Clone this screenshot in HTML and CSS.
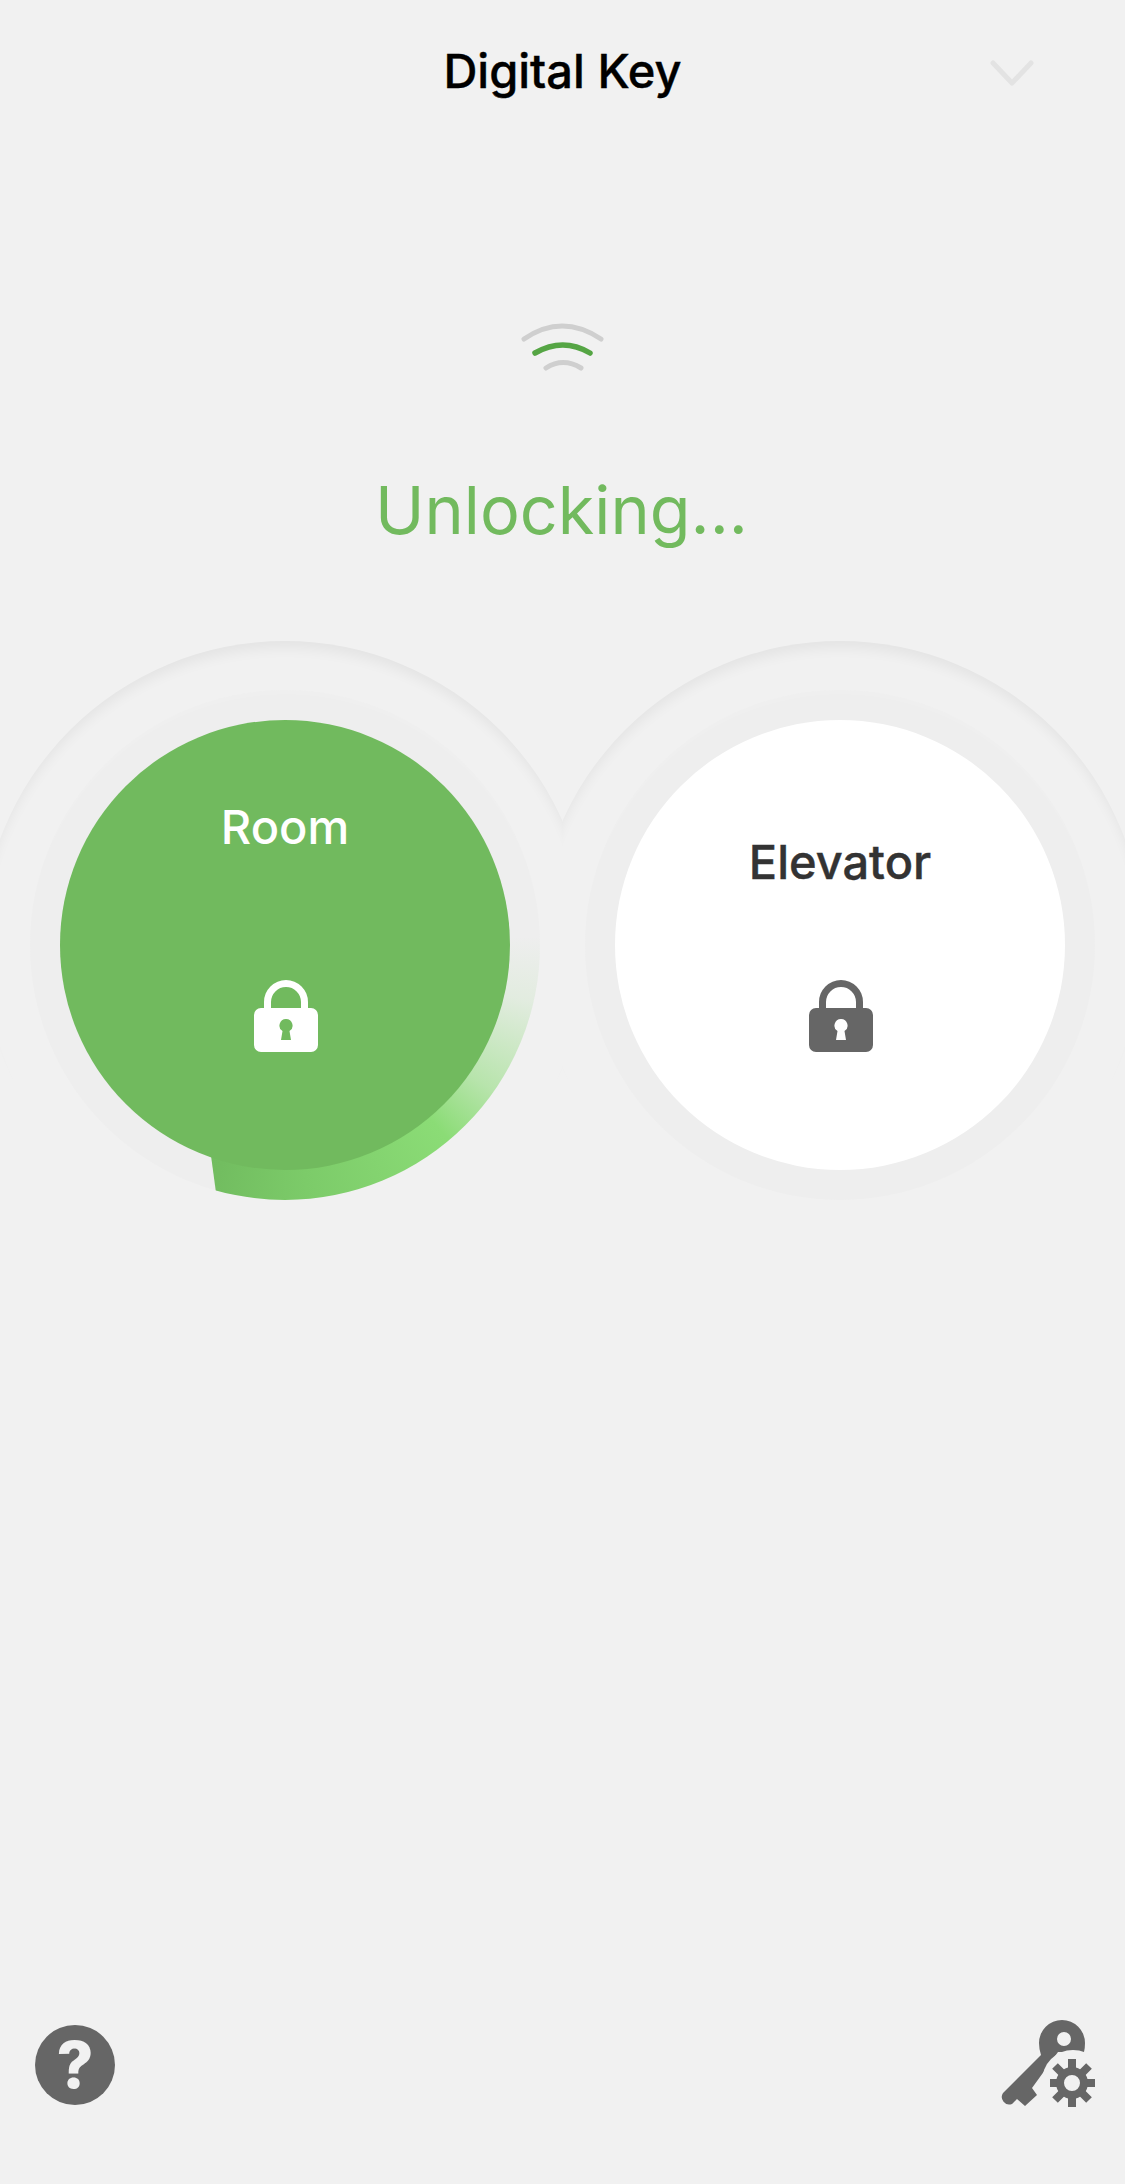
FILE: index.html
```html
<!DOCTYPE html>
<html lang="en">
<head>
<meta charset="utf-8">
<title>Digital Key</title>
<link rel="stylesheet" href="styles.css">
</head>
<body>
<main class="screen">
  <header class="topbar">
    <span></span>
    <h1 class="title">Digital Key</h1>
    <svg class="chevron" width="44" height="26" viewBox="0 0 44 26"><path d="M3 3 22 23 41 3" fill="none" stroke="#e3e3e3" stroke-width="5" stroke-linecap="round" stroke-linejoin="round"/></svg>
  </header>

  <svg class="signal" width="84" height="52" viewBox="0 0 84 52" fill="none" stroke-linecap="round">
    <path d="M3 19Q41-7 80 19" stroke="#cfcfcf" stroke-width="5"/>
    <path d="M14 33Q42 17 69 33" stroke="#55a544" stroke-width="5.500"/>
    <path d="M25 48Q42 37 60 48" stroke="#cfcfcf" stroke-width="5"/>
  </svg>

  <p class="status">Unlocking...</p>

  <section class="dials">
    <div class="dial-col dial-col-left">
      <div class="ring ring-progress">
        <div class="face face-active">
          <span class="label label-raised">Room</span>
          <svg class="lock" width="64" height="72" viewBox="0 0 64 72"><path class="lock-shape" fill-rule="evenodd" d="M10 28V22a22 22 0 0 1 44 0v6h-7V22a15 15 0 0 0-30 0v6zM7 28H57a7 7 0 0 1 7 7V65a7 7 0 0 1-7 7H7a7 7 0 0 1-7-7V35a7 7 0 0 1 7-7zM32 39a6.500 6.500 0 0 0-3.500 12L27 60H37L35.500 51A6.500 6.500 0 0 0 32 39z"/></svg>
        </div>
      </div>
    </div>
    <div class="dial-col dial-col-right">
      <div class="ring">
        <div class="face">
          <span class="label label-lowered">Elevator</span>
          <svg class="lock" width="64" height="72" viewBox="0 0 64 72"><path class="lock-shape" fill-rule="evenodd" d="M10 28V22a22 22 0 0 1 44 0v6h-7V22a15 15 0 0 0-30 0v6zM7 28H57a7 7 0 0 1 7 7V65a7 7 0 0 1-7 7H7a7 7 0 0 1-7-7V35a7 7 0 0 1 7-7zM32 39a6.500 6.500 0 0 0-3.500 12L27 60H37L35.500 51A6.500 6.500 0 0 0 32 39z"/></svg>
        </div>
      </div>
    </div>
  </section>

  <footer class="footer">
    <div class="help">?</div>
    <svg class="key-settings" width="130" height="130" viewBox="0 0 130 130">
      <path fill="#666" fill-rule="evenodd" d="M82 20a23 23 0 0 1 23 23q0 5-1 9H78L52 88l5 7-12 11-8-7-5 5a7.500 7.500 0 0 1-9-11L61 55q-2-6-2-12a23 23 0 0 1 23-23zM84 32a7 7 0 1 0 0 14 7 7 0 0 0 0-14z"/>
      <circle cx="93" cy="81" r="31" fill="#f1f1f1"/>
      <g stroke="#666" stroke-width="8">
        <path d="M92 59V107M70 83H115M75 66 109 100M109 66 75 100"/>
      </g>
      <circle cx="92" cy="83" r="12" fill="#f1f1f1" stroke="#666" stroke-width="8"/>
    </svg>
  </footer>
</main>
</body>
</html>
```

FILE: styles.css
```css
* { box-sizing: border-box; }

html, body {
  margin: 0;
  background: #f1f1f1;
}

.screen {
  width: 1125px;
  height: 2184px;
  display: flex;
  flex-direction: column;
  overflow: hidden;
  font-family: Inter, "Noto Sans", "Liberation Sans", sans-serif;
  background: #f1f1f1;
}

.topbar {
  height: 142px;
  display: grid;
  grid-template-columns: 1fr auto 1fr;
  align-items: center;
}

.title {
  margin: 0;
  font-size: 47px;
  font-weight: 500;
  line-height: 60px;
  color: #000;
  -webkit-text-stroke: 0.4px #000;
}

.chevron {
  justify-self: end;
  margin-right: 91px;
  margin-top: 4px;
}

.signal {
  display: block;
  margin: 178px 0 0 521px;
}

.status {
  margin: 98px 0 0;
  padding-right: 2px;
  height: 80px;
  line-height: 80px;
  text-align: center;
  font-size: 66.500px;
  font-weight: 400;
  color: #72ba5e;
}

.dials {
  margin-top: 70px;
  display: flex;
}

.dial-col {
  flex: 1 1 0;
  height: 640px;
  padding-top: 70px;
  display: flex;
  overflow: hidden;
  isolation: isolate;
}

.dial-col-left {
  justify-content: flex-end;
  padding-right: 22.5px;
}

.dial-col-right {
  justify-content: flex-start;
  padding-left: 22.5px;
}

.ring {
  position: relative;
  width: 510px;
  height: 510px;
  padding: 30px;
  border-radius: 50%;
  background: #eeeeee;
  box-shadow: inset 0 6px 8px -2px rgba(255, 255, 255, 0.12);
}

.ring::before {
  content: "";
  position: absolute;
  inset: -49px;
  z-index: -1;
  border-radius: 50%;
  box-shadow: inset 0 11px 13px -4px rgba(0, 0, 0, 0.055);
}

.ring-progress::after {
  content: "";
  position: absolute;
  inset: 0;
  border-radius: 50%;
  background: conic-gradient(
    rgba(139, 220, 118, 0) 0deg,
    rgba(139, 220, 118, 0) 88deg,
    rgba(139, 220, 118, 0.12) 103deg,
    rgba(139, 220, 118, 0.55) 125deg,
    #8bdc76 140deg,
    #7ccb69 175deg,
    #72bd60 196deg,
    #70bb5e 210deg,
    rgba(139, 220, 118, 0) 210.300deg
  );
  clip-path: polygon(145px 200px, 510px 200px, 510px 510px, 187px 510px);
}

.face {
  position: relative;
  z-index: 1;
  width: 450px;
  height: 450px;
  border-radius: 50%;
  background: #fff;
  display: flex;
  flex-direction: column;
  align-items: center;
}

.face-active {
  background: #71ba5e;
}

.label {
  height: 60px;
  line-height: 60px;
  font-size: 47px;
  font-weight: 500;
  color: #333;
  -webkit-text-stroke: 0.4px #333;
}

.face-active .label {
  color: #fff;
  -webkit-text-stroke: 0;
}

.label-raised {
  margin-top: 77px;
  margin-bottom: 123px;
}

.label-lowered {
  margin-top: 112px;
  margin-bottom: 88px;
}

.lock {
  margin-left: 2px;
}

.lock-shape {
  fill: #666;
}

.face-active .lock-shape {
  fill: #fff;
}

.footer {
  margin-top: auto;
  padding: 0 15px 54px 35px;
  display: flex;
  justify-content: space-between;
  align-items: center;
}

.help {
  width: 80px;
  height: 80px;
  border-radius: 50%;
  background: #666;
  color: #f1f1f1;
  font-size: 64px;
  font-weight: 800;
  line-height: 80px;
  text-align: center;
}
```
